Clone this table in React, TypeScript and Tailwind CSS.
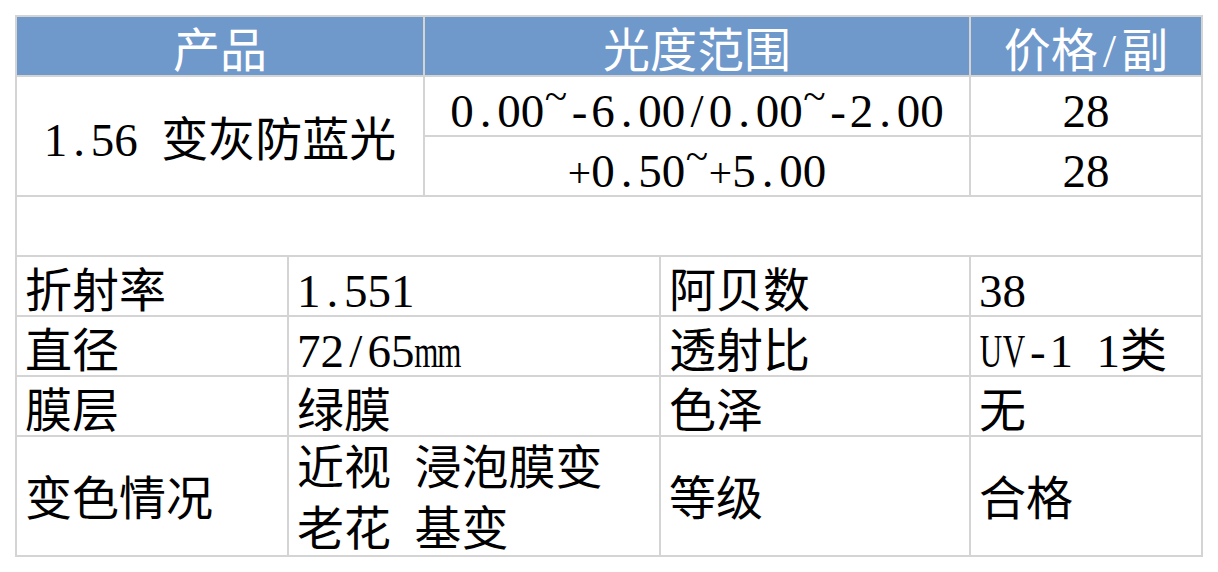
import React from "react"

// SimSun-style half-width punctuation: give each mark a fixed half-em box
function H({ text }: { text: string }) {
  return (
    <>
      {Array.from(text).map((ch, i) => {
        if (ch === "~") {
          return (
            <span key={i} className="inline-flex w-[0.5em] justify-center align-[0.36em]">
              <span className="text-[0.88em]">~</span>
            </span>
          )
        }
        if (ch === "+") {
          return (
            <span key={i} className="inline-flex w-[0.5em] justify-center">
              <span className="text-[0.88em]">+</span>
            </span>
          )
        }
        if (/[A-Za-z]/.test(ch)) {
          return (
            <span key={i} className="inline-flex w-[0.5em] justify-center">
              <span className="inline-block scale-x-[0.66]">{ch}</span>
            </span>
          )
        }
        if (".-/ ".includes(ch)) {
          return (
            <span key={i} className="inline-block w-[0.5em] text-center">
              {ch === " " ? "\u00a0" : ch}
            </span>
          )
        }
        return <React.Fragment key={i}>{ch}</React.Fragment>
      })}
    </>
  )
}

const head = "bg-[#6f98cb] text-white flex items-end justify-center"
const cell = "bg-white flex items-end px-2"
const center = "bg-white flex items-end justify-center"

const specs = [
  { a: "折射率", b: "1.551", c: "阿贝数", d: "38" },
  { a: "直径", b: "72/65mm", c: "透射比", d: "UV-1 1类" },
  { a: "膜层", b: "绿膜", c: "色泽", d: "无" },
]

export default function App() {
  return (
    <div className="min-h-screen bg-white pt-[15px] pl-[15px] font-['Liberation_Serif','Noto_Sans_CJK_SC',serif] text-[47px] leading-none text-black">
      <div className="grid w-[1188px] grid-cols-[270px_134px_234px_308px_230px] grid-rows-[58px_58px_58px_58px_58px_58px_58px_118px] gap-[2px] bg-[#d4d4d4] p-[2px]">
        <div className={`${head} col-span-2`}>产品</div>
        <div className={`${head} col-span-2`}>光度范围</div>
        <div className={head}>
          <H text="价格/副" />
        </div>

        <div className="col-span-2 row-span-2 flex items-center justify-center bg-white pt-[8px]">
          <H text="1.56 变灰防蓝光" />
        </div>
        <div className={`${center} col-span-2`}>
          <div>
            <H text="0.00~-6.00/0.00~-2.00" />
          </div>
        </div>
        <div className={center}>28</div>
        <div className={`${center} col-span-2`}>
          <div>
            <H text="+0.50~+5.00" />
          </div>
        </div>
        <div className={center}>28</div>

        <div className="col-span-5 bg-white" />

        {specs.map((r) => (
          <React.Fragment key={r.a}>
            <div className={cell}>{r.a}</div>
            <div className={`${cell} col-span-2`}>
              <div>
                <H text={r.b} />
              </div>
            </div>
            <div className={cell}>{r.c}</div>
            <div className={cell}>
              <div>
                <H text={r.d} />
              </div>
            </div>
          </React.Fragment>
        ))}

        <div className="flex items-center bg-white px-2 pt-[6px]">变色情况</div>
        <div className="col-span-2 flex items-center bg-white px-2 pt-[6px] leading-[61px]">
          <div>
            <H text="近视 浸泡膜变" />
            <br />
            <H text="老花 基变" />
          </div>
        </div>
        <div className="flex items-center bg-white px-2 pt-[6px]">等级</div>
        <div className="flex items-center bg-white px-2 pt-[6px]">合格</div>
      </div>
    </div>
  )
}
